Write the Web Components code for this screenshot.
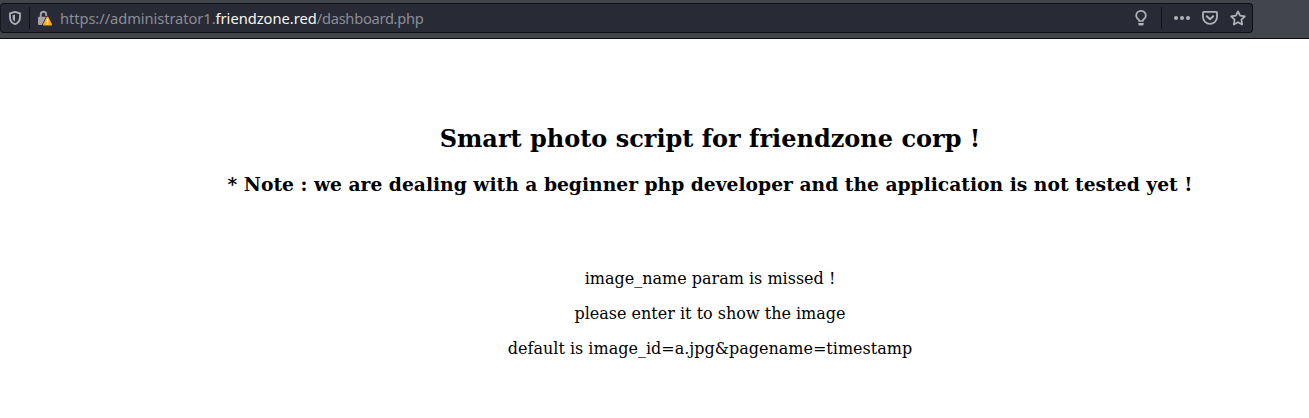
<!DOCTYPE html>
<html lang="en">
<head>
<meta charset="utf-8">
<title>FriendZone Admin</title>
<style>
html,body{margin:0;height:100%;overflow:hidden;background:#fff}
</style>
<script>
class Base extends HTMLElement {
  connectedCallback() {
    if (!this.shadowRoot) this.attachShadow({mode: 'open'}).innerHTML = this.render();
  }
}
customElements.define('browser-window', class extends Base {
  render() { return `<style>
    :host{display:flex;flex-direction:column;height:100vh;overflow:hidden}
    header{box-sizing:border-box;flex:none;height:39px;padding-top:3px;background:#42454c;border-bottom:1px solid #0b0b0e}
    main{flex:1;overflow:hidden}
    </style><header><slot name="toolbar"></slot></header><main><slot></slot></main>`; }
});
customElements.define('address-bar', class extends Base {
  render() { return `<style>
    :host{display:flex;align-items:center;box-sizing:border-box;width:1253px;height:30px;background:#282a36;border:1px solid #0f1014;border-left-color:#17181d;border-radius:4px}
    .id{display:flex;align-items:center;gap:6px;padding-left:6px;width:53px;box-sizing:border-box}
    .url{flex:1;padding-left:6px}
    .actions{display:flex;align-items:center;padding-right:6px;gap:12px}
    </style><div class="id"><slot name="identity"></slot></div><div class="url"><slot></slot></div><div class="actions"><slot name="actions"></slot></div>`; }
});
customElements.define('bar-divider', class extends Base {
  render() { return `<style>:host{display:block;flex:none;width:1px;height:22px;background:#111217}</style>`; }
});
customElements.define('page-url', class extends Base {
  render() { return `<style>
    :host{display:block;font:14.667px/20px "Noto Sans",sans-serif;color:#8b8e94;white-space:nowrap}
    b{font-weight:400;color:#f8f8f2}
    .pre{letter-spacing:-.06px}
    .path{letter-spacing:-.28px}
    </style><span class="pre">${this.getAttribute('prefix')}</span><b>${this.getAttribute('domain')}</b><span class="path">${this.getAttribute('path')}</span>`; }
});
const ICONS = {
  shield: '<path d="M8 1.9 13 3.4V7.2C13 10.6 11.2 13 8 14.2 4.8 13 3 10.6 3 7.2V3.4Z" fill="none" stroke="#b1b2b7" stroke-width="1.8" stroke-linejoin="round"/><path d="M8 4.5V11.6C6.2 10.6 5.6 9.2 5.6 7.2V5.2Z" fill="#b1b2b7"/>',
  lock: '<path d="M4.8 8V4.4a2.7 2.7 0 0 1 5.4 0V6" fill="none" stroke="#a2a3a8" stroke-width="1.9"/><path d="M3 6.8H10.4L6.2 15H3Q2 15 2 14V7.8Q2 6.8 3 6.8Z" fill="#a2a3a8"/><path d="M11.5 6.6Q12 6.6 12.3 7.1L15.9 14.1Q16.4 15.6 15 15.6H8Q6.6 15.6 7.1 14.1L10.7 7.1Q11 6.6 11.5 6.6Z" fill="#ffad14" stroke="#282a36" stroke-width="1.4" paint-order="stroke"/><path d="M11.5 9V12.4M11.5 13.2V14.6" stroke="#fff" stroke-width="1.4"/>',
  bulb: '<path d="M6 11V9.8C4.4 8.9 3.2 7.6 3.2 5.6a4.8 4.8 0 0 1 9.6 0C12.8 7.6 11.6 8.9 10 9.8V11Z" fill="none" stroke="#b1b2b7" stroke-width="1.7" stroke-linejoin="round"/><path d="M5.3 13H10.7V14Q10.7 15.5 9 15.5H7Q5.3 15.5 5.3 14Z" fill="#b1b2b7"/>',
  dots: '<g fill="#b1b2b7"><circle cx="2" cy="8" r="2"/><circle cx="8" cy="8" r="2"/><circle cx="14" cy="8" r="2"/></g>',
  pocket: '<path d="M1.9 1.9H14.1Q15 1.9 15 2.8V7a7 6.9 0 0 1-14 0V2.8Q1 1.9 1.9 1.9Z" fill="none" stroke="#b1b2b7" stroke-width="1.8"/><path d="M4.8 6.2 8 9.2 11.2 6.2" fill="none" stroke="#b1b2b7" stroke-width="2" stroke-linecap="round" stroke-linejoin="round"/>',
  star: '<path d="M8 1.3 10.1 5.6 14.9 6.3 11.4 9.7 12.2 14.5 8 12.2 3.8 14.5 4.6 9.7 1.1 6.3 5.9 5.6Z" fill="none" stroke="#b1b2b7" stroke-width="1.7" stroke-linejoin="round"/>'
};
customElements.define('bar-icon', class extends Base {
  render() { return `<style>:host{display:block;flex:none;width:16px;height:16px}svg{display:block;overflow:visible}</style>
    <svg width="16" height="16" viewBox="0 0 16 16" aria-hidden="true">${ICONS[this.getAttribute('name')]}</svg>`; }
});
customElements.define('dashboard-page', class extends Base {
  render() { return `<style>
    :host{display:block;width:1420px;padding-top:86px;box-sizing:border-box;text-align:center;color:#000;font:16px/19px "DejaVu Serif",serif}
    h2{margin:0 0 20px;font-size:24px;line-height:28px}
    h3{margin:0 0 74px;font-size:18.72px;line-height:22px}
    p{margin:0 0 16px}
    </style>
    <h2>Smart photo script for friendzone corp !</h2>
    <h3>* Note : we are dealing with a beginner php developer and the application is not tested yet !</h3>
    <p>image_name param is missed !</p>
    <p>please enter it to show the image</p>
    <p>default is image_id=a.jpg&amp;pagename=timestamp</p>`; }
});
</script>
</head>
<body>
<browser-window>
  <address-bar slot="toolbar">
    <bar-icon slot="identity" name="shield"></bar-icon>
    <bar-divider slot="identity"></bar-divider>
    <bar-icon slot="identity" name="lock"></bar-icon>
    <page-url prefix="https://administrator1." domain="friendzone.red" path="/dashboard.php"></page-url>
    <bar-icon slot="actions" name="bulb"></bar-icon>
    <bar-divider slot="actions"></bar-divider>
    <bar-icon slot="actions" name="dots"></bar-icon>
    <bar-icon slot="actions" name="pocket"></bar-icon>
    <bar-icon slot="actions" name="star"></bar-icon>
  </address-bar>
  <dashboard-page></dashboard-page>
</browser-window>
</body>
</html>
